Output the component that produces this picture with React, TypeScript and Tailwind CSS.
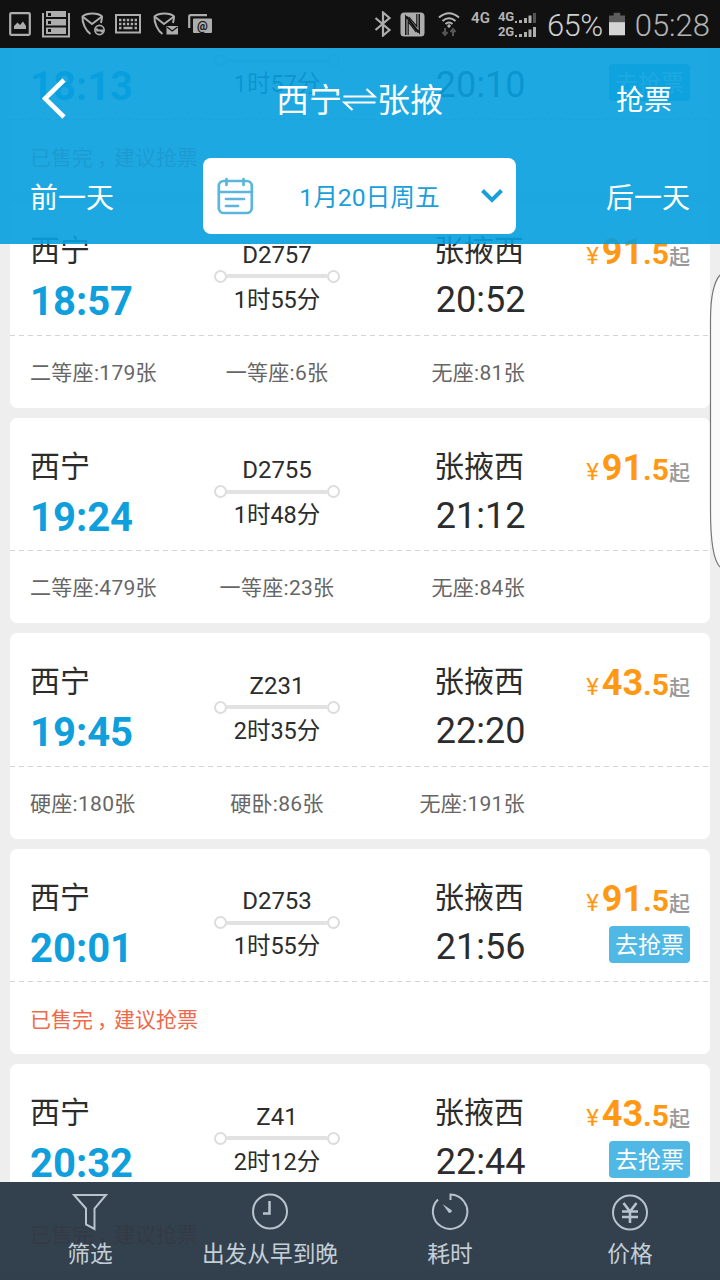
import type { ReactNode } from 'react';

type Train = {
    no?: string;
    from?: string;
    to?: string;
    depart: string;
    arrive: string;
    duration: string;
    price?: [string, string];
    seats?: [string, string, string];
};

const trains: Train[] = [
    // scrolled past the top, only its lower half is still on screen
    { depart: '18:13', arrive: '20:10', duration: '1时57分' },
    { no: 'D2757', from: '西宁', to: '张掖西', depart: '18:57', arrive: '20:52', duration: '1时55分', price: ['91', '.5'], seats: ['二等座:179张', '一等座:6张', '无座:81张'] },
    { no: 'D2755', from: '西宁', to: '张掖西', depart: '19:24', arrive: '21:12', duration: '1时48分', price: ['91', '.5'], seats: ['二等座:479张', '一等座:23张', '无座:84张'] },
    { no: 'Z231', from: '西宁', to: '张掖西', depart: '19:45', arrive: '22:20', duration: '2时35分', price: ['43', '.5'], seats: ['硬座:180张', '硬卧:86张', '无座:191张'] },
    { no: 'D2753', from: '西宁', to: '张掖西', depart: '20:01', arrive: '21:56', duration: '1时55分', price: ['91', '.5'] },
    { no: 'Z41', from: '西宁', to: '张掖西', depart: '20:32', arrive: '22:44', duration: '2时12分', price: ['43', '.5'] },
];

function ShieldMark() {
    return (
        <g fill="none" stroke="#adadad" strokeWidth="2">
            <path d="M9.500 22C5 19 1 11 1.500 4.500C6 .5 17 .5 21 4.500C21 7 20.500 9 20 11" />
            <path d="M1.500 4.500L11 12L21 4.500" />
        </g>
    );
}

function StatusBar() {
    return (
        <div className="flex h-12 items-center bg-[#111111] text-[#b4b4b4]">
            <svg className="ml-[9px] shrink-0" width="22" height="24" viewBox="0 0 22 24">
                <rect x="1.200" y="1.200" width="19.600" height="21.600" rx="1" fill="none" stroke="#adadad" strokeWidth="2.200" />
                <path d="M5 17V14L8.500 10.500L11 13L14 9.500L17 14V17Z" fill="#adadad" />
            </svg>
            <svg className="ml-[11px] shrink-0" width="28" height="28" viewBox="0 0 28 28">
                <path d="M1 3V26.500H27V3" fill="none" stroke="#adadad" strokeWidth="2" />
                <path d="M4 1H24V7H4ZM4 9H24V15.500H4ZM4 17.500H24V24H4Z" fill="#adadad" />
                <path d="M6 3H9V6H6ZM6 11H9V14H6ZM6 19H9V22H6Z" fill="#111" />
            </svg>
            <svg className="ml-[11px] shrink-0" width="26" height="24" viewBox="0 0 26 24">
                <ShieldMark />
                <circle cx="18.500" cy="18" r="6.500" fill="#111" />
                <circle cx="18.500" cy="18" r="4.600" fill="none" stroke="#adadad" strokeWidth="1.700" />
                <path d="M15 18.500H22M16.500 16.500L15 18.500M20.500 20.500L22 18" stroke="#adadad" strokeWidth="2" fill="none" />
            </svg>
            <svg className="ml-[8px] shrink-0" width="26" height="20" viewBox="0 0 26 20">
                <rect x="1" y="1" width="24" height="17.500" fill="none" stroke="#adadad" strokeWidth="2" />
                <path d="M4 6H22M4 10H22" stroke="#adadad" strokeWidth="2.500" strokeDasharray="2.400 1.500" />
                <path d="M4 14H6.500M8.500 14H17.500M19.500 14H22" stroke="#adadad" strokeWidth="2.500" />
            </svg>
            <svg className="ml-[12px] shrink-0" width="26" height="24" viewBox="0 0 26 24">
                <ShieldMark />
                <path d="M12 12H26V24H12Z" fill="#111" />
                <path d="M13.500 14H25V22.500H13.500Z" fill="#adadad" />
                <path d="M14 15L19.200 19L24.500 15" fill="none" stroke="#111" strokeWidth="1.300" />
            </svg>
            <svg className="ml-[9px] shrink-0" width="24" height="20" viewBox="0 0 24 20">
                <path d="M1.200 14V2.500Q1.200 1.200 2.500 1.200H19" fill="none" stroke="#adadad" strokeWidth="2.200" />
                <rect x="5" y="4.500" width="19" height="14.500" rx="1" fill="#adadad" />
                <text x="14.500" y="15.500" fontSize="12" fontWeight="700" textAnchor="middle" fill="#111">@</text>
            </svg>

            <svg className="ml-auto shrink-0" width="18" height="26" viewBox="0 0 18 26">
                <path d="M1.500 7L15.500 19L9 24.500V1.500L15.500 7L1.500 19" fill="none" stroke="#adadad" strokeWidth="2.200" />
            </svg>
            <svg className="ml-[8px] shrink-0" width="25" height="25" viewBox="0 0 26 26">
                <rect x=".5" y=".5" width="25" height="25" rx="4" fill="#adadad" />
                <path d="M6 24V4.500L19 21.500M20 2V21.500L7 4.500" fill="none" stroke="#111" strokeWidth="1.500" />
                <path d="M8.500 24V10L17 21M17.500 2V15L9 5" fill="none" stroke="#111" strokeWidth="1.200" />
            </svg>
            <svg className="ml-[13px] shrink-0" width="22" height="26" viewBox="0 0 22 26">
                <path d="M1 6.500Q11 -2 21 6.500M4.500 10Q11 4.500 17.500 10M7.500 13Q11 10 14.500 13" fill="none" stroke="#b4b4b4" strokeWidth="2" />
                <circle cx="11" cy="15" r="1.700" fill="#b4b4b4" />
                <path d="M7 17V23M4.500 21L7 24L9.500 21M15 25V18.500M12.500 21L15 18L17.500 21" fill="none" stroke="#555" strokeWidth="2" />
            </svg>
            <span className="-mt-[11px] ml-[11px] text-[15px] leading-none font-semibold">4G</span>
            <div className="ml-[8px] flex w-[40px] flex-col gap-[1px] text-[13px] leading-[13.500px] font-bold">
                <div className="flex items-end">
                    <span>4G</span>
                    <svg width="22" height="12" viewBox="0 0 22 12" fill="#adadad">
                        <path d="M1 9H3V11H1ZM5 8H8V11H5ZM10 6H13V11H10ZM14.500 3.500H17.500V11H14.500Z" />
                        <path d="M19 1H22V11H19Z" fill="#555" />
                    </svg>
                </div>
                <div className="flex items-end">
                    <span>2G</span>
                    <svg width="22" height="12" viewBox="0 0 22 12" fill="#adadad">
                        <path d="M1 9H3V11H1ZM5 8H8V11H5ZM10 6H13V11H10ZM14.500 3.500H17.500V11H14.500ZM19 1H22V11H19Z" />
                    </svg>
                </div>
            </div>
            <span className="mt-[3px] ml-[9px] text-[31px] leading-none font-light tracking-[-0.500px] text-[#cfcfcf]">65%</span>
            <svg className="ml-[6px] shrink-0" width="16" height="24" viewBox="0 0 17 24">
                <path d="M5 0H12V3H17V10H0V3H5Z" fill="#5c5c5c" />
                <rect y="10" width="17" height="14" fill="#d4d4d4" />
            </svg>
            <span className="mt-[3px] mr-[10px] ml-[10px] text-[31px] leading-none font-light">05:28</span>
        </div>
    );
}

function TrainCard({ train }: { train: Train }) {
    return (
        <div className="h-[205.500px] shrink-0 rounded-[7px] bg-white">
            <div className="flex h-[132.500px] px-5">
                <div className="w-[185px] pt-[29px]">
                    <div className="h-[40px] text-[30px] leading-[40px]">{train.from}</div>
                    <div className="mt-[6px] text-[40px] leading-[50px] font-bold text-[#0f9fdc]">{train.depart}</div>
                </div>
                <div className="flex w-[124px] flex-col items-center pt-[37.500px] text-[24px] leading-[30px]">
                    <span className="h-[30px]">{train.no}</span>
                    <div className="flex w-[126px] shrink-0 items-center">
                        <span className="size-[13px] rounded-full border-2 border-[#dcdcdc]" />
                        <span className="h-1 flex-1 bg-[#e2e2e2]" />
                        <span className="size-[13px] rounded-full border-2 border-[#dcdcdc]" />
                    </div>
                    <span className="mt-[2px] text-[23.500px]">{train.duration}</span>
                </div>
                <div className="flex flex-1 flex-col items-end pt-[29px]">
                    <div className="h-[40px] text-[30px] leading-[40px]">{train.to}</div>
                    <div className="mt-[6px] -mr-[1.500px] text-[36px] leading-[46px]">{train.arrive}</div>
                </div>
                <div className="flex w-[166px] flex-col items-end pt-[28px]">
                    <div className="flex h-[49px] items-baseline font-bold text-[#ff9914]">
                        {train.price && (
                            <>
                                <span className="mr-[3px] text-[24px] font-normal">¥</span>
                                <span className="text-[36px] leading-[44px]">{train.price[0]}</span>
                                <span className="text-[30px]">{train.price[1]}</span>
                                <span className="text-[21px] font-medium text-[#999999]">起</span>
                            </>
                        )}
                    </div>
                    {!train.seats && (
                        <button className="h-[37px] w-[81px] rounded-[4px] bg-[#4fb8e4] pt-[3px] text-[23px] leading-[34px] text-white">去抢票</button>
                    )}
                </div>
            </div>
            <div className="h-px bg-[repeating-linear-gradient(90deg,#d4d4d4_0_5px,transparent_5px_9px)]" />
            <div className="flex h-[72px] items-center px-5 pt-[3px] text-[21px] text-[#666666]">
                {train.seats ? (
                    <div className="flex tracking-[0.300px]">
                        <span className="w-[165px]">{train.seats[0]}</span>
                        <span className="w-[164px] text-center">{train.seats[1]}</span>
                        <span className="w-[166px] text-right">{train.seats[2]}</span>
                    </div>
                ) : (
                    <span className="pt-[1px] text-[#ee6a4c]">
                        已售完<span className="relative left-[4px]">，</span>建议抢票
                    </span>
                )}
            </div>
        </div>
    );
}

function Header() {
    return (
        <header className="absolute inset-x-0 top-0 h-[196px] bg-[#089fde]/91 text-white">
            <div className="flex h-[110px] items-center justify-between pr-12 pb-[8px] pl-[42px]">
                <svg width="82" height="42" viewBox="0 0 82 42" fill="none">
                    <path d="M22 2L3 20.500L22 39" stroke="white" strokeWidth="4.600" />
                </svg>
                <h1 className="flex items-center pt-[4px] pl-[5px] text-[33px] leading-[50px]">
                    西宁
                    <svg className="-mt-[5px]" width="35" height="30" viewBox="0 0 34 30" fill="none" stroke="white" strokeWidth="2.200">
                        <path d="M1 12.500H32L24 5M33 18.500H2L10 26" />
                    </svg>
                    张掖
                </h1>
                <span className="w-[82px] pt-[4px] text-right text-[28px] leading-[40px]">抢票</span>
            </div>
            <div className="flex items-center justify-between px-[30px] text-[28px]">
                <span className="w-[173px] pt-[5px]">前一天</span>
                <div className="-ml-[1px] flex h-[76px] w-[313px] shrink-0 items-center rounded-[8px] bg-white pr-[12px] pl-[14px] text-[#1a9fd9]">
                    <svg width="37" height="38" viewBox="0 0 37 38" fill="none" stroke="#5bb5dc" strokeWidth="2.700" strokeLinecap="round">
                        <rect x="1.800" y="4" width="33" height="32" rx="5" />
                        <path d="M2 15H35M9.500 2V8M26.500 2V8M9 22H27M9 29H21" />
                    </svg>
                    <span className="flex-1 pt-[4px] pl-[5px] text-center text-[24.700px]">1月20日周五</span>
                    <svg width="24" height="16" viewBox="0 0 24 16" fill="none">
                        <path d="M2.500 2.500L12 12L21.500 2.500" stroke="#1a9fd9" strokeWidth="4" />
                    </svg>
                </div>
                <span className="w-[173px] pt-[5px] text-right">后一天</span>
            </div>
        </header>
    );
}

function TabItem({ label, children }: { label: string; children: ReactNode }) {
    return (
        <div className="flex flex-1 flex-col items-center pt-[10px] text-[#c3ced6]">
            <svg width="40" height="40" viewBox="0 0 40 40" fill="none" stroke="#b8c4cd" strokeWidth="2">
                {children}
            </svg>
            <span className="mt-[6px] text-[22.700px] leading-[34px]">{label}</span>
        </div>
    );
}

function BottomBar() {
    return (
        <nav className="absolute inset-x-0 bottom-0 flex h-[98px] bg-[#283745]/95">
            <TabItem label="筛选">
                <path d="M4 3H36L24.500 16.500V37L16 32.500V16.500Z" />
            </TabItem>
            <TabItem label="出发从早到晚">
                <circle cx="20" cy="19.500" r="17" />
                <path d="M19.500 9V21.500H13" strokeWidth="2.500" />
            </TabItem>
            <TabItem label="耗时">
                <path d="M20.500 8V2.500A17.200 17.200 0 1 1 8 7.500" />
                <path d="M12.500 12L22 18.500Q21.500 21 19 21Z" fill="#b8c4cd" stroke="none" />
            </TabItem>
            <TabItem label="价格">
                <circle cx="20" cy="20.500" r="17" />
                <path d="M13.500 11L20 19.500L26.500 11M20 19.500V31M12 19.500H28M12 25H28" strokeWidth="2.600" />
            </TabItem>
        </nav>
    );
}

export default function App() {
    return (
        <div className="h-[1280px] w-[720px] overflow-hidden bg-[#eeeeee] font-['Roboto','Noto_Sans_CJK_SC',sans-serif] text-[#2c2c2c]">
            <StatusBar />
            <main className="relative h-[1232px] overflow-hidden">
                <div className="-mt-[61.200px] flex flex-col gap-[10px] px-[10px]">
                    {trains.map((train) => (
                        <TrainCard key={train.depart} train={train} />
                    ))}
                </div>
                <svg className="absolute top-[224px] right-0" width="11" height="298" viewBox="0 0 11 298">
                    <path d="M11 3C5 10 1.500 24 1.500 48V238C1.500 270 4 288 11 295" fill="#fafafa" stroke="#777777" strokeWidth="1.200" />
                </svg>
                <Header />
                <BottomBar />
            </main>
        </div>
    );
}
